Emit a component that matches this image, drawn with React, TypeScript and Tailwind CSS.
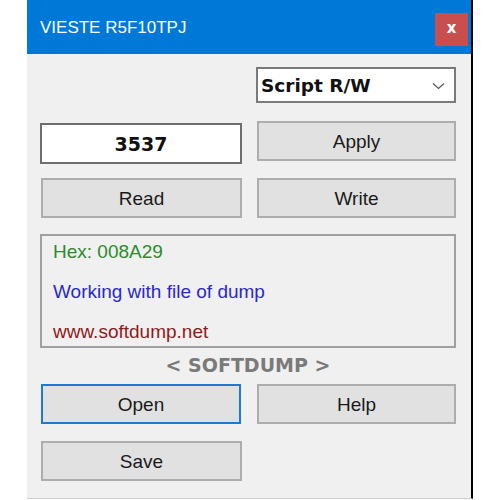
import React from "react";

const body = "font-['Liberation_Sans',Arial,sans-serif]";
const bold = "font-['DejaVu_Sans',Verdana,sans-serif] font-bold";

function Btn({ label, focus, className = "" }: { label: string; focus?: boolean; className?: string }) {
  return (
    <button
      className={`flex h-[40px] items-center justify-center bg-[#e1e1e1] pt-[3px] text-[19px] text-[#1a1a1a] ${body} ${
        focus ? "border-2 border-[#1f78d1]" : "border-2 border-[#adadad]"
      } ${className}`}
    >
      {label}
    </button>
  );
}

export default function App() {
  return (
    <div className="h-[500px] w-[500px] overflow-hidden bg-white">
      <div className="ml-[27px] flex h-[499px] w-[446px] flex-col border-r-2 border-b border-r-black border-b-[#cfcfcf] bg-[#f0f0f0]">
        {/* title bar */}
        <div className="flex h-[54px] shrink-0 items-start justify-between bg-[#0078d7]">
          <div className={`flex h-full items-center pl-[13px] pt-[2px] text-[17px] text-white ${body}`}>VIESTE R5F10TPJ</div>
          <div className="mr-[3px] mt-[13px] flex h-[33px] w-[33px] items-center justify-center bg-[#c94f4f] pb-[2px] font-['DejaVu_Sans',sans-serif] text-[15px] font-bold text-white">
            x
          </div>
        </div>

        <div className="flex flex-col pl-[13px]">
          {/* mode select */}
          <div className="mt-[13px] flex">
            <div className="ml-[216px] flex h-[36px] w-[200px] items-center justify-between border-2 border-[#7a7a7a] bg-white pl-[3px] pr-[9px] pt-[1px]">
              <span className={`text-[18.5px] text-[#111] ${bold}`}>Script R/W</span>
              <svg width="13" height="8" viewBox="0 0 13 8" fill="none" stroke="#555" strokeWidth="1.2">
                <path d="M1 1.5 L6.5 6.5 L12 1.5" />
              </svg>
            </div>
          </div>

          {/* value + apply */}
          <div className="mt-[18px] flex items-start gap-[15px]">
            <div className={`mt-[2px] flex h-[41px] w-[202px] items-center justify-center border-2 border-[#6e6e6e] bg-white pt-[1px] text-[19px] text-[#111] ${bold}`}>
              3537
            </div>
            <Btn label="Apply" className="w-[199px]" />
          </div>

          <div className="mt-[14px] flex gap-[15px]">
            <Btn label="Read" className="ml-[1px] w-[201px]" />
            <Btn label="Write" className="w-[199px]" />
          </div>

          {/* info box */}
          <div className={`mt-[16px] flex h-[114px] w-[416px] flex-col gap-[16px] border-2 border-[#a0a0a0] pl-[11px] pt-[4px] text-[19px] leading-[24px] ${body}`}>
            <div className="text-[#2d8a2d]">Hex: 008A29</div>
            <div className="text-[#2a2ac4]">Working with file of dump</div>
            <div className="text-[#8e1b1b]">www.softdump.net</div>
          </div>

          <div className={`flex h-[36px] w-[416px] items-center justify-center pb-[2px] text-[19px] text-[#7a7a7a] ${bold}`}>
            &lt; SOFTDUMP &gt;
          </div>

          <div className="flex gap-[15px]">
            <Btn label="Open" focus className="ml-[1px] w-[200px]" />
            <Btn label="Help" className="ml-[1px] w-[199px]" />
          </div>

          <div className="mt-[17px] flex">
            <Btn label="Save" className="ml-[1px] w-[201px]" />
          </div>
        </div>
      </div>
    </div>
  );
}
